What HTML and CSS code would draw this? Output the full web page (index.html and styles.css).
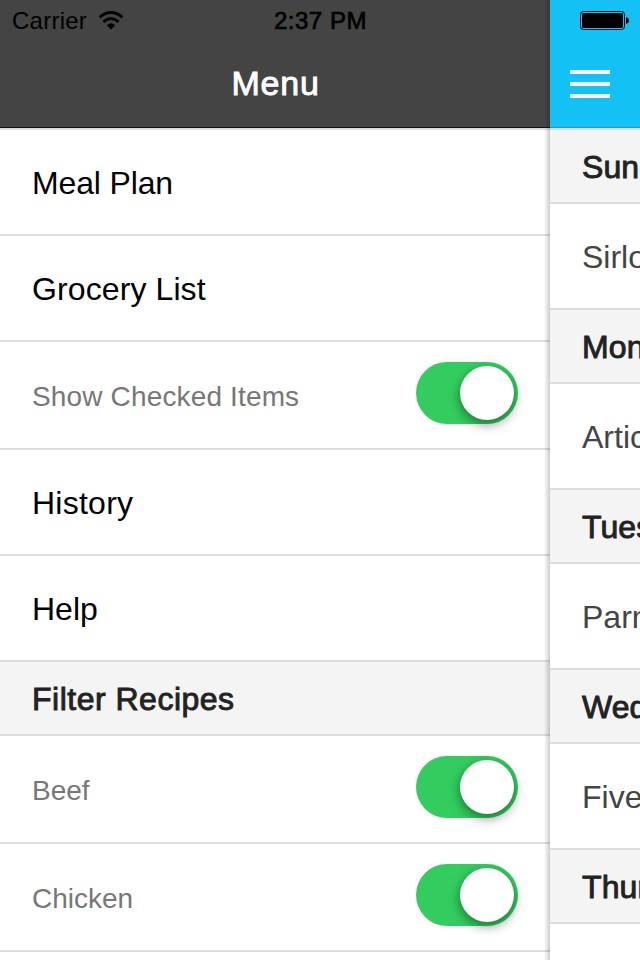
FILE: index.html
```html
<!DOCTYPE html>
<html lang="en">
<head>
<meta charset="utf-8">
<title>Menu</title>
<link rel="stylesheet" href="styles.css">
</head>
<body>
<div class="screen">
  <div class="menu">
    <header class="bar bar-dark"><h1 class="title medium">Menu</h1></header>
    <div class="list">
      <div class="item plan">Meal Plan</div>
      <div class="item grocery">Grocery List</div>
      <div class="item toggle"><span class="show">Show Checked Items</span><span class="switch"><span class="knob"></span></span></div>
      <div class="item history">History</div>
      <div class="item">Help</div>
      <div class="divider medium">Filter Recipes</div>
      <div class="item toggle"><span>Beef</span><span class="switch"><span class="knob"></span></span></div>
      <div class="item toggle"><span>Chicken</span><span class="switch"><span class="knob"></span></span></div>
    </div>
  </div>
  <div class="content">
    <header class="bar bar-blue">
      <svg class="burger" width="40" height="28" viewBox="0 0 40 28"><path fill="#fff" d="M0 0h40v4H0zM0 12h40v4H0zM0 24h40v4H0z"/></svg>
    </header>
    <div class="list">
      <div class="divider medium">Sunday</div>
      <div class="item meal">Sirloin</div>
      <div class="divider medium">Monday</div>
      <div class="item meal">Artichoke</div>
      <div class="divider medium">Tuesday</div>
      <div class="item meal">Parmesan</div>
      <div class="divider medium">Wednesday</div>
      <div class="item meal">Five</div>
      <div class="divider medium">Thursday</div>
    </div>
  </div>
  <div class="status">
    <span class="carrier">Carrier</span>
    <svg class="wifi" width="26" height="20" viewBox="0 0 26 20">
      <g fill="none" stroke="#000" stroke-width="2.9">
        <path d="M1.6 6.3Q13 -3.1 24.4 6.3"/>
        <path d="M5.4 10.9Q13 4.3 20.6 10.9"/>
      </g>
      <path d="M8.8 14.2Q13 10.4 17.2 14.2L13 18.4Z"/>
    </svg>
    <span class="clock medium">2:37 PM</span>
    <svg class="battery" width="50" height="20" viewBox="0 0 50 20">
      <rect x=".5" y=".5" width="44" height="18" rx="3" fill="none" stroke="#000"/>
      <rect x="2" y="2" width="41" height="15" rx="1.5"/>
      <path d="M46 6.2Q49 6.5 49 9.5T46 12.8Z"/>
    </svg>
  </div>
</div>
</body>
</html>
```
FILE: styles.css
```css
* { box-sizing: border-box; }
body { margin: 0; font-family: "Liberation Sans", Arial, sans-serif; font-size: 32px; color: #000; background: #fff; }
.screen { position: relative; display: flex; width: 640px; height: 960px; overflow: hidden; }
.menu { position: relative; width: 550px; height: 960px; overflow: hidden; }
.content { width: 90px; height: 960px; overflow: hidden; background: #fff; }
/* shadow cast by the content panel onto the menu */
.menu::after { content: ""; position: absolute; top: 0; right: 0; width: 6px; height: 100%; background: linear-gradient(to left, rgba(0,0,0,.2), rgba(0,0,0,.12) 40%, rgba(0,0,0,0)); }
.bar { height: 128px; padding-top: 40px; display: flex; align-items: center; justify-content: center; }
.bar-dark { background: #444; border-bottom: 1px solid #111; }
.bar-blue { background: #13c1f5; border-bottom: 1px solid #0fa5d2; justify-content: flex-start; padding-left: 20px; }
.title { margin: 0 0 1px 1px; font-size: 34px; font-weight: 400; line-height: 40px; letter-spacing: .8px; color: #fff; }
.medium { -webkit-text-stroke: .9px currentColor; }
.list { border-top: 2px solid #ddd; white-space: nowrap; }
.item, .divider { display: flex; align-items: center; padding-left: 32px; border-bottom: 2px solid #ddd; }
.item { height: 106px; padding-top: 2px; }
.plan { letter-spacing: -.15px; }
.grocery { letter-spacing: .1px; }
.history { letter-spacing: .25px; }
.divider { height: 74px; padding-top: 2px; background: #f4f4f4; color: #222; letter-spacing: .5px; }
.content .divider { letter-spacing: .1px; }
.toggle { height: 108px; padding: 0 32px; justify-content: space-between; font-size: 28px; color: #777; }
.toggle > span:first-child { padding-top: 3px; }
.show { letter-spacing: .15px; }
.meal { color: #444; }
.switch { width: 102px; height: 62px; margin-top: -4px; padding: 4px; border-radius: 31px; background: #33cd5f; display: flex; justify-content: flex-end; }
.knob { width: 54px; height: 54px; border-radius: 50%; background: #fff; box-shadow: 0 4px 12px rgba(0,0,0,.45); }
.status { position: absolute; top: 0; left: 0; width: 640px; height: 40px; padding: 0 10px 0 12px; display: flex; align-items: center; font-size: 24px; }
.carrier { width: 86px; letter-spacing: .25px; padding-top: 1px; }
.wifi { margin-top: 1px; }
.clock { margin-left: 150px; padding-top: 1px; letter-spacing: .5px; -webkit-text-stroke-width: .7px; }
.battery { margin-left: auto; margin-top: 2px; }
```
